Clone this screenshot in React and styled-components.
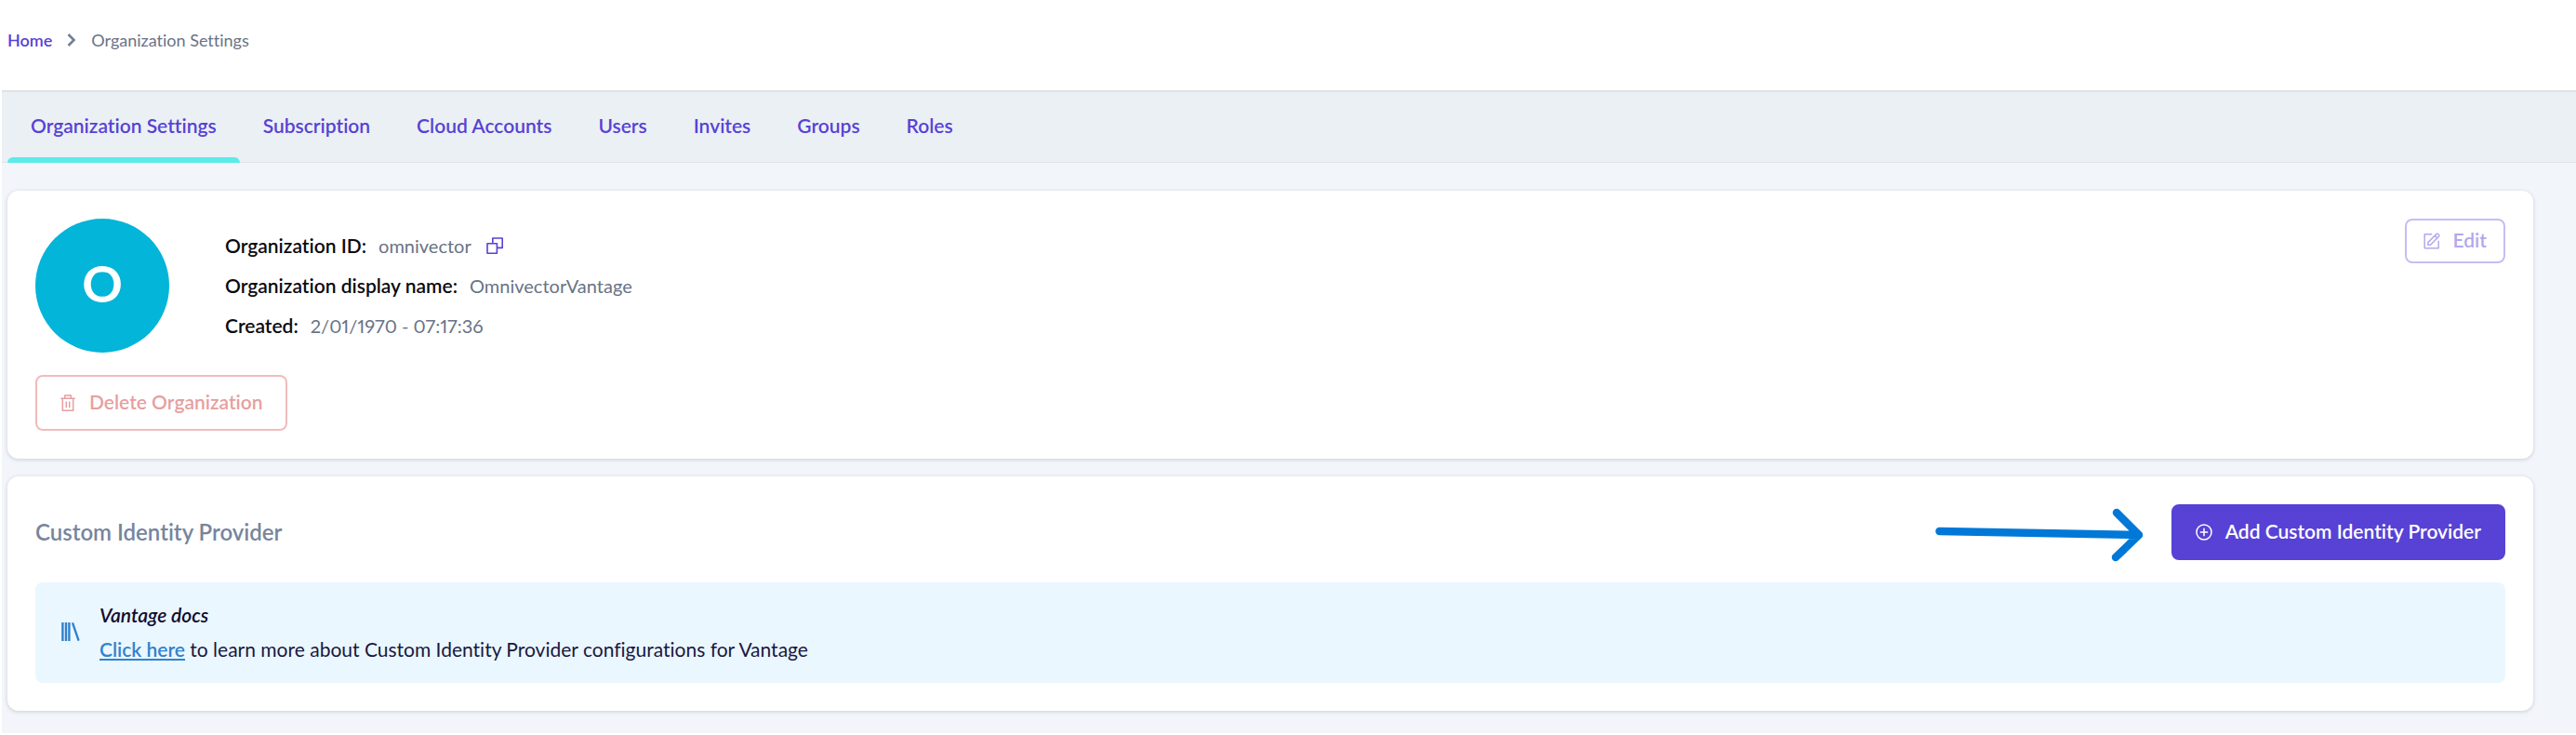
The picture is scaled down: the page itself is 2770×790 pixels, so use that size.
import React from 'react';
import styled, { createGlobalStyle } from 'styled-components';

const color = {
  primary: '#5742d5',
  dangerFaded: '#e69f9f',
  accent: '#5bebe9',
  avatar: '#02b5d9',
  link: '#3182ce',
  ink: '#0b0b10',
  muted: '#697386',
  heading: '#77859d',
};

const GlobalStyle = createGlobalStyle`
  *, *::before, *::after { box-sizing: border-box; }
  body {
    margin: 0;
    background: #fff;
    font-family: Lato, "Liberation Sans", sans-serif;
    font-size: 21px;
    line-height: 30px;
    font-variant-ligatures: none;
  }
  button { font: inherit; font-variant-ligatures: none; cursor: pointer; }
`;

const Page = styled.div`
  padding-left: 2px;
`;

const Breadcrumbs = styled.nav`
  display: flex;
  align-items: center;
  gap: 16px;
  padding: 31px 6px 42px;
  font-size: 18px;
  line-height: 24px;
  color: ${color.muted};
`;

const Crumb = styled.a`
  color: ${color.primary};
  font-weight: 600;
  text-decoration: none;
`;

const Tabs = styled.nav`
  display: flex;
  padding: 0 6px;
  background: #ebf0f4;
  border-top: 2px solid #dde2e6;
  box-shadow: inset 0 -1px 1px #dfe4e8;
`;

const Tab = styled.a`
  position: relative;
  padding: 21px 25px 25px;
  color: ${color.primary};
  font-weight: 600;
  text-decoration: none;

  &[aria-current='page']::after {
    content: '';
    position: absolute;
    left: 0;
    right: 0;
    bottom: 0;
    height: 6px;
    border-radius: 6px 6px 0 0;
    background: ${color.accent};
  }
`;

const Content = styled.main`
  display: flex;
  flex-direction: column;
  gap: 19px;
  padding: 30px 46px 24px 6px;
  background: #f2f5fa;
`;

const Card = styled.section`
  display: flex;
  flex-direction: column;
  align-items: stretch;
  gap: 24px;
  padding: 30px;
  border-radius: 12px;
  background: #fff;
  box-shadow: 0 1px 4px rgba(40, 50, 70, 0.2);
`;

const Profile = styled.div`
  display: flex;
  align-items: flex-start;
`;

const Avatar = styled.div`
  display: flex;
  align-items: center;
  justify-content: center;
  flex: none;
  width: 144px;
  height: 144px;
  padding-bottom: 4px;
  border-radius: 50%;
  background: ${color.avatar};
  color: #fff;
  font-size: 54px;
  font-weight: 700;
`;

const Details = styled.dl`
  display: flex;
  flex-direction: column;
  justify-content: center;
  align-self: center;
  gap: 13px;
  flex: 1;
  margin: 0 0 0 60px;
`;

const Detail = styled.div`
  display: flex;
  align-items: center;
  gap: 13px;
`;

const Term = styled.dt`
  color: ${color.ink};
  font-weight: 600;
`;

const Value = styled.dd`
  display: flex;
  align-items: center;
  gap: 16px;
  margin: 0;
  color: ${color.muted};
  font-size: 20px;
  font-variant-numeric: proportional-nums;
`;

const CopyButton = styled.button`
  display: flex;
  padding: 0;
  border: 0;
  background: none;
  color: ${color.primary};
`;

const tones = {
  solid: { text: '#fff', border: color.primary, fill: color.primary },
  outline: { text: '#b3a8ed', border: '#c6bdf3', fill: '#fff' },
  danger: { text: color.dangerFaded, border: '#efbcbc', fill: '#fff' },
};

const Button = styled.button`
  display: inline-flex;
  align-items: center;
  align-self: flex-start;
  gap: 14px;
  height: ${(p) => (p.$compact ? '48px' : '60px')};
  padding: 0 ${(p) => (p.$compact ? '18px' : '24px')};
  border: 2px solid ${(p) => tones[p.$tone].border};
  border-radius: 8px;
  background: ${(p) => tones[p.$tone].fill};
  color: ${(p) => tones[p.$tone].text};
  font-weight: 600;
`;

const ButtonLabel = styled.span`
  padding-bottom: 2px;
`;

const SectionHeader = styled.header`
  display: flex;
  align-items: center;
  gap: 30px;
`;

const SectionTitle = styled.h2`
  flex: 1;
  margin: 0;
  color: ${color.heading};
  font-size: 24px;
  font-weight: 600;
`;

const Notice = styled.aside`
  display: flex;
  align-items: center;
  gap: 21px;
  padding: 16px 28px 18px;
  border-radius: 8px;
  background: #eaf7ff;
  color: #1b1740;
  line-height: 37px;
`;

const NoticeText = styled.p`
  margin: 0;
`;

const NoticeTitle = styled.em`
  display: block;
  color: #120c30;
  font-weight: 600;
`;

const NoticeLink = styled.a`
  color: ${color.link};
  font-weight: 600;
  text-decoration: underline;
  text-decoration-thickness: 2px;
  text-underline-offset: 2px;
`;

const ChevronIcon = () => (
  <svg width="10" height="16" viewBox="0 0 10 16" fill="none" stroke="#718096" strokeWidth="2.6" aria-hidden="true">
    <path d="M1.5 2 7.5 8l-6 6" />
  </svg>
);

const CopyIcon = () => (
  <svg width="18" height="18" viewBox="0 0 18 18" fill="none" stroke="currentColor" strokeWidth="1.6" strokeLinejoin="round" aria-hidden="true">
    <path d="M1 6.8h10.4v10.4H1z" />
    <path d="M6.8 6.8V1h10.4v10.4h-5.8" />
  </svg>
);

const TrashIcon = () => (
  <svg width="18" height="18" viewBox="0 0 18 18" fill="none" stroke="currentColor" strokeWidth="1.5" strokeLinejoin="round" aria-hidden="true">
    <path d="M1.3 4.3h15.4M5.7 4.3V.9h6.6v3.4M3.3 4.3v12.9h11.4V4.3M7.3 7.6v6.6M10.7 7.6v6.6" />
  </svg>
);

const EditIcon = () => (
  <svg width="18" height="18" viewBox="0 0 18 18" fill="none" stroke="currentColor" strokeWidth="1.5" strokeLinejoin="round" aria-hidden="true">
    <path d="M9.3 1.8H1.2v15h15V8.8" />
    <path d="m4.9 10.6 8.9-9a1.4 1.4 0 0 1 2 0l.6.6a1.4 1.4 0 0 1 0 2l-8.9 9H4.9zM12.2 3.3l2.5 2.5" />
  </svg>
);

const AddIcon = () => (
  <svg width="18" height="18" viewBox="0 0 18 18" fill="none" stroke="currentColor" strokeWidth="1.5" aria-hidden="true">
    <circle cx="9" cy="9" r="8" />
    <path d="M9 4.8v8.4M4.8 9h8.4" />
  </svg>
);

const BooksIcon = () => (
  <svg width="20" height="22" viewBox="0 0 20 22" stroke={color.link} strokeWidth="2.4" aria-hidden="true">
    <path d="M1.4 1v20M5 1v20M8.4 1v20M12 1.3l6.6 19.4" />
  </svg>
);

const PointerArrow = () => (
  <svg width="224" height="60" viewBox="0 0 224 60" overflow="visible" fill="none" stroke="#0078d7" strokeWidth="8.5" strokeLinecap="round" strokeLinejoin="round" aria-hidden="true">
    <path d="M4.5 29 219 33M195 9l24 24-25 24" />
  </svg>
);

const tabs = ['Organization Settings', 'Subscription', 'Cloud Accounts', 'Users', 'Invites', 'Groups', 'Roles'];

export default function App() {
  return (
    <Page>
      <GlobalStyle />
      <Breadcrumbs aria-label="Breadcrumb">
        <Crumb href="#home">Home</Crumb>
        <ChevronIcon />
        <span>Organization Settings</span>
      </Breadcrumbs>
      <Tabs aria-label="Organization">
        {tabs.map((name, i) => (
          <Tab key={name} href={`#${name.toLowerCase().replace(' ', '-')}`} aria-current={i === 0 ? 'page' : undefined}>
            {name}
          </Tab>
        ))}
      </Tabs>
      <Content>
        <Card>
          <Profile>
            <Avatar>O</Avatar>
            <Details>
              <Detail>
                <Term>Organization ID:</Term>
                <Value>
                  omnivector
                  <CopyButton type="button" aria-label="Copy organization ID">
                    <CopyIcon />
                  </CopyButton>
                </Value>
              </Detail>
              <Detail>
                <Term>Organization display name:</Term>
                <Value>OmnivectorVantage</Value>
              </Detail>
              <Detail>
                <Term>Created:</Term>
                <Value>2/01/1970 - 07:17:36</Value>
              </Detail>
            </Details>
            <Button type="button" $tone="outline" $compact>
              <EditIcon />
              <ButtonLabel>Edit</ButtonLabel>
            </Button>
          </Profile>
          <Button type="button" $tone="danger">
            <TrashIcon />
            <ButtonLabel>Delete Organization</ButtonLabel>
          </Button>
        </Card>
        <Card>
          <SectionHeader>
            <SectionTitle>Custom Identity Provider</SectionTitle>
            <PointerArrow />
            <Button type="button" $tone="solid">
              <AddIcon />
              <ButtonLabel>Add Custom Identity Provider</ButtonLabel>
            </Button>
          </SectionHeader>
          <Notice>
            <BooksIcon />
            <NoticeText>
              <NoticeTitle>Vantage docs</NoticeTitle>
              <NoticeLink href="#docs">Click here</NoticeLink> to learn more about Custom Identity Provider
              configurations for Vantage
            </NoticeText>
          </Notice>
        </Card>
      </Content>
    </Page>
  );
}
